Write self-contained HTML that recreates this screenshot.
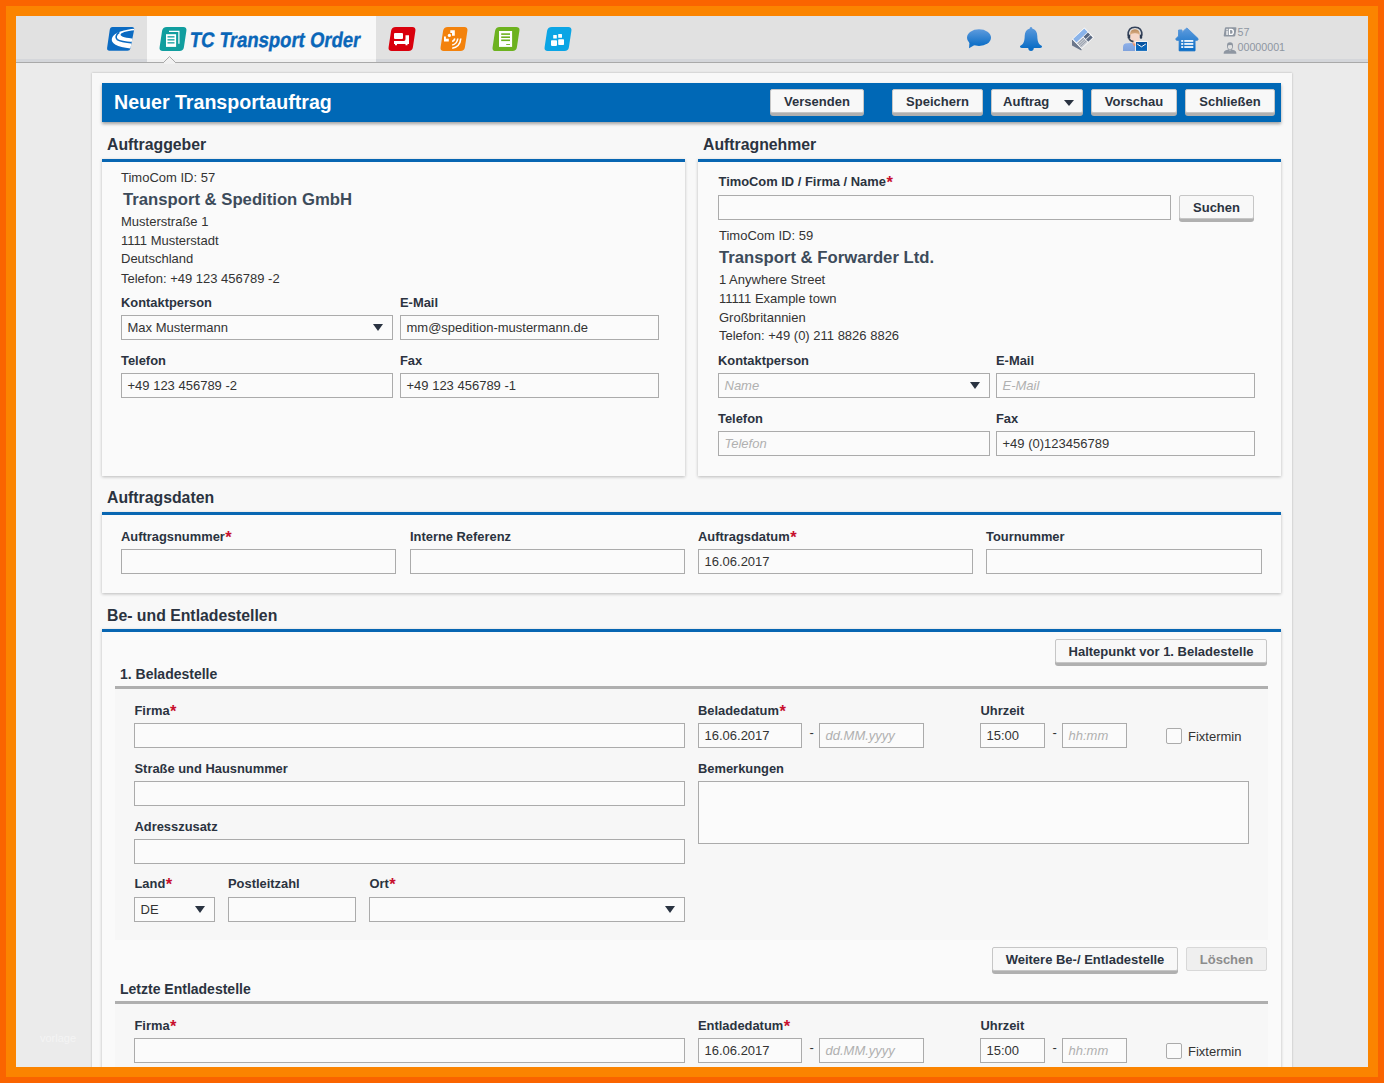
<!DOCTYPE html>
<html><head><meta charset="utf-8"><title>TC Transport Order</title>
<style>
html,body{margin:0;padding:0;}
body{width:1384px;height:1083px;position:relative;overflow:hidden;background:#FA6400;font-family:"Liberation Sans", sans-serif;}
.a{position:absolute;}
.t{position:absolute;white-space:nowrap;font-family:"Liberation Sans", sans-serif;}
</style></head><body>
<div class="a" style="left:0;top:0;width:1384px;height:1083px;overflow:hidden;">
<div class="a" style="left:6px;top:6px;width:1372px;height:1071px;background:#FB8400;"></div>
<div class="a" style="left:16px;top:16px;width:1352px;height:1051px;overflow:hidden;background:#EBEBEB;"><div class="a" style="left:-16px;top:-16px;width:1384px;height:1083px;">
<div class="a" style="left:16px;top:16px;width:1352px;height:46px;background:#E1E1E1;"></div>
<div class="a" style="left:16px;top:59px;width:1352px;height:3px;background:#D4D6DA;"></div>
<div class="a" style="left:16px;top:62px;width:1352px;height:1px;background:#A9A9A9;"></div>
<div class="a" style="left:147px;top:16px;width:229px;height:46px;background:#F8F8F8;"></div>
<div class="a" style="left:147px;top:59px;width:229px;height:3px;background:#F1F1F1;"></div>
<svg class="a" style="left:105px;top:27px;" width="30" height="24" viewBox="0 0 30 24">
<defs><clipPath id="lc"><path d="M7.5,0 H27 Q29.5,0 29.2,2.5 L25.4,21.5 Q25,23.8 22.5,23.8 H4.5 Q1.8,23.8 2.1,21 L4.7,3 Q5.1,0 7.5,0 Z"/></clipPath></defs>
<path d="M7.5,0 H27 Q29.5,0 29.2,2.5 L25.4,21.5 Q25,23.8 22.5,23.8 H4.5 Q1.8,23.8 2.1,21 L4.7,3 Q5.1,0 7.5,0 Z" fill="#0B6BC2"/>
<g clip-path="url(#lc)">
<path d="M30,1.8 C20,2.3 9,5.5 7,11 C5.3,16.5 12,19.8 25.5,21.6 L30,21.6 L30,11.9 C21,11 15.6,9.8 15.6,7.8 C15.6,5.9 21,4 30,3.3 Z" fill="#fff"/>
<path d="M14.3,5.2 C10.8,7.3 10.2,11 12.3,12.6 C14.8,14.4 20,15.2 28,15.9" fill="none" stroke="#0B6BC2" stroke-width="1.6"/>
</g></svg>
<svg class="a" style="left:159px;top:27px;" width="28" height="24" viewBox="0 0 28 24"><path d="M7.8,0 H24.2 Q28,0 27.4,3.8 L24.9,20.2 Q24.3,24 20.5,24 H3.8 Q0,24 0.6,20.2 L3.1,3.8 Q3.7,0 7.8,0 Z" fill="#119E9F"/>
<path d="M10,4.3 H19.9 V16.7" fill="none" stroke="#fff" stroke-width="1.2"/>
<rect x="7" y="7.2" width="10.1" height="12.7" fill="#fff"/>
<rect x="8.5" y="9.2" width="7" height="1.3" fill="#119E9F"/>
<rect x="8.5" y="12.2" width="7" height="1.3" fill="#119E9F"/>
<rect x="8.5" y="15.2" width="7" height="1.3" fill="#119E9F"/></svg>
<svg class="a" style="left:388px;top:27px;" width="28" height="24" viewBox="0 0 28 24"><path d="M7.8,0 H24.2 Q28,0 27.4,3.8 L24.9,20.2 Q24.3,24 20.5,24 H3.8 Q0,24 0.6,20.2 L3.1,3.8 Q3.7,0 7.8,0 Z" fill="#D9000D"/>
<rect x="6" y="6" width="9" height="6" rx="1" fill="#fff"/>
<path d="M6,14 H16 Q17.5,14 17.5,12 V8.2 H21 V17 H19.5 V18.3 H17.5 V17 H9 V18.3 H7 V17 H6 Z" fill="#fff"/></svg>
<svg class="a" style="left:440px;top:27px;" width="28" height="24" viewBox="0 0 28 24"><path d="M7.8,0 H24.2 Q28,0 27.4,3.8 L24.9,20.2 Q24.3,24 20.5,24 H3.8 Q0,24 0.6,20.2 L3.1,3.8 Q3.7,0 7.8,0 Z" fill="#F3820C"/>
<path d="M10.3,3.3 H14.8 V8.7 H12 V6 H10.3 Z" fill="#fff"/>
<circle cx="9.4" cy="8.4" r="1.6" fill="#fff"/>
<path d="M4,9.5 H5.9 V11.8 H8.8 V14.5 H4 Z" fill="#fff"/>
<g fill="none" stroke="#fff" stroke-width="1.6" stroke-linecap="butt">
<path d="M12.2,14.6 Q14.3,13.7 14.8,11.5"/>
<path d="M12.2,18 Q17,17 17.8,11.5"/>
<path d="M12.2,21.3 Q20,20 20.8,11.5"/>
</g></svg>
<svg class="a" style="left:492px;top:27px;" width="28" height="24" viewBox="0 0 28 24"><path d="M7.8,0 H24.2 Q28,0 27.4,3.8 L24.9,20.2 Q24.3,24 20.5,24 H3.8 Q0,24 0.6,20.2 L3.1,3.8 Q3.7,0 7.8,0 Z" fill="#6DB21F"/>
<rect x="7" y="4" width="13.1" height="15.9" fill="#fff"/>
<rect x="9.2" y="6.3" width="8.8" height="1.6" fill="#6DB21F"/>
<rect x="9.2" y="9.4" width="8.8" height="1.6" fill="#6DB21F"/>
<rect x="9.2" y="12.5" width="8.8" height="1.6" fill="#6DB21F"/>
<rect x="14.2" y="17" width="3.8" height="0.9" fill="#6DB21F"/></svg>
<svg class="a" style="left:544px;top:27px;" width="28" height="24" viewBox="0 0 28 24"><path d="M7.8,0 H24.2 Q28,0 27.4,3.8 L24.9,20.2 Q24.3,24 20.5,24 H3.8 Q0,24 0.6,20.2 L3.1,3.8 Q3.7,0 7.8,0 Z" fill="#0BA5E5"/>
<rect x="9.2" y="8" width="3.6" height="3.6" rx="0.5" fill="#fff"/>
<rect x="14.2" y="6.9" width="3.8" height="3.8" rx="0.5" fill="#fff"/>
<rect x="7" y="13.2" width="6" height="5.7" rx="0.8" fill="#fff"/>
<rect x="14.2" y="12.3" width="5.8" height="5.7" rx="0.8" fill="#fff"/></svg>
<svg class="a" style="left:966px;top:28px;" width="26" height="22" viewBox="0 0 26 22"><defs><linearGradient id="gb" x1="0" y1="0" x2="0" y2="1"><stop offset="0" stop-color="#5E9BDD"/><stop offset="1" stop-color="#0A6DC6"/></linearGradient></defs>
<ellipse cx="13" cy="9.6" rx="12" ry="8.4" fill="url(#gb)"/>
<path d="M3.5,14 L3,20.3 L9.5,16.5 Z" fill="#1573C9"/></svg>
<svg class="a" style="left:1019px;top:26px;" width="24" height="26" viewBox="0 0 24 26"><defs><linearGradient id="gl" x1="0" y1="0" x2="0" y2="1"><stop offset="0" stop-color="#5E9BDD"/><stop offset="1" stop-color="#0A6DC6"/></linearGradient></defs>
<path d="M12,1 C13,1 13.3,1.8 13.2,2.6 C16.5,3.4 18.2,6.2 18.3,10 C18.4,15 19.2,17.8 22.6,19.8 Q23.4,20.4 22.8,21.3 Q22.3,22 21,22 H3 Q1.7,22 1.2,21.3 Q0.6,20.4 1.4,19.8 C4.8,17.8 5.6,15 5.7,10 C5.8,6.2 7.5,3.4 10.8,2.6 C10.7,1.8 11,1 12,1 Z" fill="url(#gl)"/>
<path d="M9.2,22 Q9.4,25 12,25 Q14.6,25 14.8,22 Z" fill="#0A6DC6"/></svg>
<svg class="a" style="left:1071px;top:26px;" width="25" height="26" viewBox="0 0 25 26">
<path d="M1,13.2 L10.6,23.1 L10.3,24.6 L1,19.6 Z" fill="#6B778B"/>
<g transform="matrix(9.6,9.9,-12.4,11.8,13.4,1.4)">
<path d="M0,0 H1 V1 H0 Z" fill="#FFFFFF"/>
<rect x="0.05" y="0.05" width="0.35" height="0.9" fill="#8AB3E9"/>
<rect x="0.45" y="0.06" width="0.23" height="0.36" fill="#5A6982"/>
<rect x="0.72" y="0.06" width="0.23" height="0.36" fill="#5A6982"/>
<rect x="0.45" y="0.47" width="0.5" height="0.48" fill="#C8CCD3"/>
<rect x="0.50" y="0.46" width="0.05" height="0.49" fill="#8A93A2"/>
<rect x="0.64" y="0.46" width="0.05" height="0.49" fill="#8A93A2"/>
<rect x="0.78" y="0.46" width="0.05" height="0.49" fill="#8A93A2"/>
</g></svg>
<svg class="a" style="left:1122px;top:26px;" width="26" height="26" viewBox="0 0 26 26">
<defs><linearGradient id="gs" x1="0" y1="0" x2="0" y2="1"><stop offset="0" stop-color="#B98A5C"/><stop offset="1" stop-color="#E2B890"/></linearGradient>
<linearGradient id="gbody" x1="0" y1="0" x2="0" y2="1"><stop offset="0" stop-color="#8DB0EA"/><stop offset="1" stop-color="#7FA2DC"/></linearGradient></defs>
<path d="M1,25 V21 Q1,17.3 5,17.2 L10,17 L13.3,19.5 V25 Z" fill="url(#gbody)"/>
<path d="M9.8,16 H13.8 V20 L11.8,20 Z" fill="#E99572"/>
<path d="M8.2,8 Q8.2,3.5 12.9,3.5 Q17.6,3.5 17.6,8 L17.5,13 Q17,17.3 13,17.5 Q9,17.3 8.4,13 Z" fill="#F6D8CA"/>
<path d="M8,9.5 Q7.8,3.3 12.9,3.3 Q18,3.3 17.8,9.5 Q16.5,7 12.9,7.2 Q9.3,7 8,9.5 Z" fill="url(#gs)"/>
<path d="M6.1,9.5 Q5.8,1.2 13,1.2 Q20.2,1.2 19.9,9.5" fill="none" stroke="#34425A" stroke-width="1.6"/>
<rect x="5.6" y="8.4" width="2.6" height="4.4" rx="1" fill="#2C3A50"/>
<rect x="17.8" y="8.4" width="2.4" height="4.4" rx="1" fill="#2C3A50"/>
<path d="M7,12.5 Q8,15 11.5,15.6" fill="none" stroke="#3A4656" stroke-width="1.7"/>
<rect x="13.4" y="15.3" width="12.2" height="10" fill="#fff" opacity="0.9"/>
<rect x="14" y="16" width="11" height="8.9" fill="#0A66BA"/>
<path d="M14,16 H25 V18 L19.5,21 L14,18 Z" fill="#0552A0"/>
<path d="M15.2,18 L19.5,20.8 L23.8,18" fill="none" stroke="#fff" stroke-width="1"/></svg>
<svg class="a" style="left:1174px;top:26px;" width="26" height="26" viewBox="0 0 26 26"><defs><linearGradient id="gh" x1="0" y1="0" x2="0" y2="1"><stop offset="0" stop-color="#5E9BDD"/><stop offset="1" stop-color="#0A6DC6"/></linearGradient></defs>
<path d="M13,2 L24,12.6 Q24.6,13.8 23.3,14.2 L21,14.2 L21,24.8 L5.2,24.8 L5.2,14.2 L2.7,14.2 Q1.4,13.8 2,12.6 L4.6,10 L4.6,4 L8,4 L8,6.5 L12,2.5 Z" fill="url(#gh)" stroke="url(#gh)" stroke-width="1" stroke-linejoin="round"/>
<g fill="#fff"><rect x="7.2" y="14.1" width="2" height="1.7"/><rect x="10.3" y="14.1" width="9" height="1.7"/>
<rect x="7.2" y="17.1" width="2" height="1.7"/><rect x="10.3" y="17.1" width="9" height="1.7"/>
<rect x="7.2" y="20.2" width="2" height="1.7"/><rect x="10.3" y="20.2" width="9" height="1.7"/></g></svg>
<svg class="a" style="left:1223px;top:27px;" width="14" height="10" viewBox="0 0 14 10">
<path d="M3,0.3 H12.5 Q13.6,0.3 13.4,1.5 L12.3,8.5 Q12.1,9.6 11,9.6 H1.6 Q0.5,9.6 0.7,8.5 L1.8,1.5 Q2,0.3 3,0.3 Z" fill="#8E96A1"/>
<rect x="3.4" y="3.6" width="1.3" height="4.4" fill="#fff"/><rect x="3.4" y="1.8" width="1.3" height="1.2" fill="#fff"/>
<path d="M5.8,1.8 H8.2 Q11,1.8 11,4.9 Q11,8 8.2,8 H5.8 Z M7.1,3 V6.8 H8 Q9.6,6.8 9.6,4.9 Q9.6,3 8,3 Z" fill="#fff"/></svg>
<svg class="a" style="left:1223px;top:42px;" width="14" height="12" viewBox="0 0 14 12">
<path d="M4,3.5 Q4,0.3 7,0.3 Q10,0.3 10,3.5 L9.7,6 Q9,8.3 7,8.3 Q5,8.3 4.3,6 Z" fill="#8E96A1"/>
<path d="M0.6,11.7 Q0.6,8.5 3.6,8 L5.2,7.6 Q7,9.6 8.8,7.6 L10.4,8 Q13.4,8.5 13.4,11.7 Z" fill="#8E96A1"/>
<path d="M5,3.5 Q6.5,2.5 9,3.3 L9,5.5 Q8.5,7.5 7,7.5 Q5.5,7.5 5,5.5 Z" fill="#E1E1E1"/></svg>
<div class="t" style="left:188.5px;top:29px;font-size:21px;line-height:21px;font-weight:bold;color:#0A66B8;-webkit-text-stroke:0.4px #0A66B8;transform:matrix(0.88,0,-0.15,1,0,0);transform-origin:0 18px;">TC Transport Order</div>
<div class="t" style="left:1237.5px;top:26.5px;font-size:10.7px;line-height:11px;color:#8E96A1;">57</div>
<div class="t" style="left:1237.5px;top:42px;font-size:10.7px;line-height:11px;color:#8E96A1;">00000001</div>
<svg class="a" style="left:162px;top:55px;" width="15" height="9" viewBox="0 0 15 9"><path d="M0,7.5 L1.5,7.5 L7.5,1.5 L13.5,7.5 L15,7.5" fill="#F1F1F1" stroke="#A9A9A9" stroke-width="1"/><rect x="2" y="7" width="11" height="2" fill="#F1F1F1"/></svg>
<div class="a" style="left:92px;top:73px;width:1200px;height:1007px;background:#F8F8F8;box-shadow:0 0 2px rgba(0,0,0,0.25);"></div>
<div class="t" style="left:40px;top:1033px;font-size:11px;line-height:11px;color:#F4F4F4;">vorlage</div>
<div class="a" style="left:102px;top:83px;width:1179px;height:39px;background:#0068B6;box-shadow:0 2px 3px rgba(0,0,0,0.35);"></div>
<div class="t" style="left:114px;top:93.20px;font-size:19.6px;line-height:19.6px;color:#FFFFFF;font-weight:bold;">Neuer Transportauftrag</div>
<div class="a" style="left:770px;top:92px;width:94px;height:24px;background:#B0B0B0;border-radius:0 0 3px 3px;"></div>
<div class="a" style="left:770px;top:89px;width:94px;height:24px;border:1px solid #C6C6C6;background:#F8F8F8;box-sizing:border-box;border-radius:2px;"></div>
<div class="t" style="left:770px;width:94px;text-align:center;top:95px;font-size:13px;line-height:13px;font-weight:bold;color:#2B3340;">Versenden</div>
<div class="a" style="left:892px;top:92px;width:91px;height:24px;background:#B0B0B0;border-radius:0 0 3px 3px;"></div>
<div class="a" style="left:892px;top:89px;width:91px;height:24px;border:1px solid #C6C6C6;background:#F8F8F8;box-sizing:border-box;border-radius:2px;"></div>
<div class="t" style="left:892px;width:91px;text-align:center;top:95px;font-size:13px;line-height:13px;font-weight:bold;color:#2B3340;">Speichern</div>
<div class="a" style="left:991px;top:92px;width:92px;height:24px;background:#B0B0B0;border-radius:0 0 3px 3px;"></div>
<div class="a" style="left:991px;top:89px;width:92px;height:24px;border:1px solid #C6C6C6;background:#F8F8F8;box-sizing:border-box;border-radius:2px;"></div>
<div class="t" style="left:991px;width:92px;text-align:center;top:95px;font-size:13px;line-height:13px;font-weight:bold;color:#2B3340;">Auftrag&nbsp;&nbsp;&nbsp;&nbsp;&nbsp;&nbsp;</div>
<div class="a" style="left:1064px;top:99.5px;width:0;height:0;border-left:5.5px solid transparent;border-right:5.5px solid transparent;border-top:6px solid #2A3341;"></div>
<div class="a" style="left:1091px;top:92px;width:86px;height:24px;background:#B0B0B0;border-radius:0 0 3px 3px;"></div>
<div class="a" style="left:1091px;top:89px;width:86px;height:24px;border:1px solid #C6C6C6;background:#F8F8F8;box-sizing:border-box;border-radius:2px;"></div>
<div class="t" style="left:1091px;width:86px;text-align:center;top:95px;font-size:13px;line-height:13px;font-weight:bold;color:#2B3340;">Vorschau</div>
<div class="a" style="left:1185px;top:92px;width:90px;height:24px;background:#B0B0B0;border-radius:0 0 3px 3px;"></div>
<div class="a" style="left:1185px;top:89px;width:90px;height:24px;border:1px solid #C6C6C6;background:#F8F8F8;box-sizing:border-box;border-radius:2px;"></div>
<div class="t" style="left:1185px;width:90px;text-align:center;top:95px;font-size:13px;line-height:13px;font-weight:bold;color:#2B3340;">Schließen</div>
<div class="t" style="left:107px;top:136.90px;font-size:15.8px;line-height:15.8px;color:#2B3340;font-weight:bold;">Auftraggeber</div>
<div class="a" style="left:102px;top:159px;width:583px;height:317px;background:#FAFAFA;box-shadow:0 1px 3px rgba(0,0,0,0.25);"></div>
<div class="a" style="left:102px;top:159px;width:583px;height:3px;background:#0866B2;"></div>
<div class="t" style="left:121px;top:170.80px;font-size:13px;line-height:13px;color:#333;">TimoCom ID: 57</div>
<div class="t" style="left:123px;top:192.45px;font-size:16.7px;line-height:16.7px;color:#3D4B5A;font-weight:bold;">Transport &amp; Spedition GmbH</div>
<div class="t" style="left:121px;top:215.00px;font-size:13px;line-height:13px;color:#333;">Musterstraße 1</div>
<div class="t" style="left:121px;top:233.60px;font-size:13px;line-height:13px;color:#333;">1111 Musterstadt</div>
<div class="t" style="left:121px;top:252.30px;font-size:13px;line-height:13px;color:#333;">Deutschland</div>
<div class="t" style="left:121px;top:271.50px;font-size:13px;line-height:13px;color:#333;">Telefon: +49 123 456789 -2</div>
<div class="t" style="left:121px;top:296.55px;font-size:12.9px;line-height:12.9px;color:#2B3340;font-weight:bold;">Kontaktperson</div>
<div class="t" style="left:400px;top:296.55px;font-size:12.9px;line-height:12.9px;color:#2B3340;font-weight:bold;">E-Mail</div>
<div class="a" style="left:121px;top:315px;width:272px;height:25px;border:1px solid #ABABAB;background:#FBFBFB;box-sizing:border-box;"></div>
<div class="t" style="left:127.5px;top:320.60px;font-size:13px;line-height:13px;color:#333;">Max Mustermann</div>
<div class="a" style="left:372.5px;top:324px;width:0;height:0;border-left:5.5px solid transparent;border-right:5.5px solid transparent;border-top:7px solid #2A3341;"></div>
<div class="a" style="left:400px;top:315px;width:259px;height:25px;border:1px solid #ABABAB;background:#FBFBFB;box-sizing:border-box;"></div>
<div class="t" style="left:406.5px;top:320.60px;font-size:13px;line-height:13px;color:#333;">mm@spedition-mustermann.de</div>
<div class="t" style="left:121px;top:354.75px;font-size:12.9px;line-height:12.9px;color:#2B3340;font-weight:bold;">Telefon</div>
<div class="t" style="left:400px;top:354.75px;font-size:12.9px;line-height:12.9px;color:#2B3340;font-weight:bold;">Fax</div>
<div class="a" style="left:121px;top:373px;width:272px;height:25px;border:1px solid #ABABAB;background:#FBFBFB;box-sizing:border-box;"></div>
<div class="t" style="left:127.5px;top:378.60px;font-size:13px;line-height:13px;color:#333;">+49 123 456789 -2</div>
<div class="a" style="left:400px;top:373px;width:259px;height:25px;border:1px solid #ABABAB;background:#FBFBFB;box-sizing:border-box;"></div>
<div class="t" style="left:406.5px;top:378.60px;font-size:13px;line-height:13px;color:#333;">+49 123 456789 -1</div>
<div class="t" style="left:703px;top:136.60px;font-size:15.8px;line-height:15.8px;color:#2B3340;font-weight:bold;">Auftragnehmer</div>
<div class="a" style="left:698px;top:159px;width:583px;height:317px;background:#FAFAFA;box-shadow:0 1px 3px rgba(0,0,0,0.25);"></div>
<div class="a" style="left:698px;top:159px;width:583px;height:3px;background:#0866B2;"></div>
<div class="t" style="left:718.5px;top:176.25px;font-size:12.9px;line-height:12.9px;color:#2B3340;font-weight:bold;">TimoCom ID / Firma / Name<span style="color:#C8102E;font-size:16.5px;line-height:0;position:relative;top:1.5px;margin-left:0.5px">*</span></div>
<div class="a" style="left:718px;top:195px;width:453px;height:25px;border:1px solid #ABABAB;background:#FBFBFB;box-sizing:border-box;"></div>
<div class="a" style="left:1179px;top:198px;width:75px;height:24px;background:#B0B0B0;border-radius:0 0 3px 3px;"></div>
<div class="a" style="left:1179px;top:195px;width:75px;height:24px;border:1px solid #C6C6C6;background:#F8F8F8;box-sizing:border-box;border-radius:2px;"></div>
<div class="t" style="left:1179px;width:75px;text-align:center;top:201px;font-size:13px;line-height:13px;font-weight:bold;color:#2B3340;">Suchen</div>
<div class="t" style="left:719px;top:228.80px;font-size:13px;line-height:13px;color:#333;">TimoCom ID: 59</div>
<div class="t" style="left:719px;top:250.35px;font-size:16.7px;line-height:16.7px;color:#3D4B5A;font-weight:bold;">Transport &amp; Forwarder Ltd.</div>
<div class="t" style="left:719px;top:272.80px;font-size:13px;line-height:13px;color:#333;">1 Anywhere Street</div>
<div class="t" style="left:719px;top:291.70px;font-size:13px;line-height:13px;color:#333;">11111 Example town</div>
<div class="t" style="left:719px;top:310.50px;font-size:13px;line-height:13px;color:#333;">Großbritannien</div>
<div class="t" style="left:719px;top:329.20px;font-size:13px;line-height:13px;color:#333;">Telefon: +49 (0) 211 8826 8826</div>
<div class="t" style="left:718px;top:355.15px;font-size:12.9px;line-height:12.9px;color:#2B3340;font-weight:bold;">Kontaktperson</div>
<div class="t" style="left:996px;top:355.15px;font-size:12.9px;line-height:12.9px;color:#2B3340;font-weight:bold;">E-Mail</div>
<div class="a" style="left:718px;top:373px;width:272px;height:25px;border:1px solid #ABABAB;background:#FBFBFB;box-sizing:border-box;"></div>
<div class="t" style="left:724.5px;top:378.60px;font-size:13px;line-height:13px;color:#B0B0B0;font-style:italic;">Name</div>
<div class="a" style="left:969.5px;top:382px;width:0;height:0;border-left:5.5px solid transparent;border-right:5.5px solid transparent;border-top:7px solid #2A3341;"></div>
<div class="a" style="left:996px;top:373px;width:259px;height:25px;border:1px solid #ABABAB;background:#FBFBFB;box-sizing:border-box;"></div>
<div class="t" style="left:1002.5px;top:378.60px;font-size:13px;line-height:13px;color:#B0B0B0;font-style:italic;">E-Mail</div>
<div class="t" style="left:718px;top:412.55px;font-size:12.9px;line-height:12.9px;color:#2B3340;font-weight:bold;">Telefon</div>
<div class="t" style="left:996px;top:412.55px;font-size:12.9px;line-height:12.9px;color:#2B3340;font-weight:bold;">Fax</div>
<div class="a" style="left:718px;top:431px;width:272px;height:25px;border:1px solid #ABABAB;background:#FBFBFB;box-sizing:border-box;"></div>
<div class="t" style="left:724.5px;top:436.60px;font-size:13px;line-height:13px;color:#B0B0B0;font-style:italic;">Telefon</div>
<div class="a" style="left:996px;top:431px;width:259px;height:25px;border:1px solid #ABABAB;background:#FBFBFB;box-sizing:border-box;"></div>
<div class="t" style="left:1002.5px;top:436.60px;font-size:13px;line-height:13px;color:#333;">+49 (0)123456789</div>
<div class="t" style="left:107px;top:489.60px;font-size:15.8px;line-height:15.8px;color:#2B3340;font-weight:bold;">Auftragsdaten</div>
<div class="a" style="left:102px;top:512px;width:1179px;height:81px;background:#FAFAFA;box-shadow:0 1px 3px rgba(0,0,0,0.25);"></div>
<div class="a" style="left:102px;top:512px;width:1179px;height:3px;background:#0866B2;"></div>
<div class="t" style="left:121px;top:531.25px;font-size:12.9px;line-height:12.9px;color:#2B3340;font-weight:bold;">Auftragsnummer<span style="color:#C8102E;font-size:16.5px;line-height:0;position:relative;top:1.5px;margin-left:0.5px">*</span></div>
<div class="t" style="left:410px;top:531.25px;font-size:12.9px;line-height:12.9px;color:#2B3340;font-weight:bold;">Interne Referenz</div>
<div class="t" style="left:698px;top:531.25px;font-size:12.9px;line-height:12.9px;color:#2B3340;font-weight:bold;">Auftragsdatum<span style="color:#C8102E;font-size:16.5px;line-height:0;position:relative;top:1.5px;margin-left:0.5px">*</span></div>
<div class="t" style="left:986px;top:531.25px;font-size:12.9px;line-height:12.9px;color:#2B3340;font-weight:bold;">Tournummer</div>
<div class="a" style="left:121px;top:549px;width:275px;height:25px;border:1px solid #ABABAB;background:#FBFBFB;box-sizing:border-box;"></div>
<div class="a" style="left:410px;top:549px;width:275px;height:25px;border:1px solid #ABABAB;background:#FBFBFB;box-sizing:border-box;"></div>
<div class="a" style="left:698px;top:549px;width:275px;height:25px;border:1px solid #ABABAB;background:#FBFBFB;box-sizing:border-box;"></div>
<div class="t" style="left:704.5px;top:554.60px;font-size:13px;line-height:13px;color:#333;">16.06.2017</div>
<div class="a" style="left:986px;top:549px;width:276px;height:25px;border:1px solid #ABABAB;background:#FBFBFB;box-sizing:border-box;"></div>
<div class="t" style="left:107px;top:607.60px;font-size:15.8px;line-height:15.8px;color:#2B3340;font-weight:bold;">Be- und Entladestellen</div>
<div class="a" style="left:102px;top:629px;width:1179px;height:451px;background:#FAFAFA;box-shadow:0 1px 3px rgba(0,0,0,0.25);"></div>
<div class="a" style="left:102px;top:629px;width:1179px;height:3px;background:#0866B2;"></div>
<div class="a" style="left:1055px;top:642px;width:212px;height:24px;background:#B0B0B0;border-radius:0 0 3px 3px;"></div>
<div class="a" style="left:1055px;top:639px;width:212px;height:24px;border:1px solid #C6C6C6;background:#F8F8F8;box-sizing:border-box;border-radius:2px;"></div>
<div class="t" style="left:1055px;width:212px;text-align:center;top:645px;font-size:13px;line-height:13px;font-weight:bold;color:#2B3340;">Haltepunkt vor 1. Beladestelle</div>
<div class="t" style="left:120px;top:667.00px;font-size:14px;line-height:14px;color:#2B3340;font-weight:bold;">1. Beladestelle</div>
<div class="a" style="left:115px;top:686px;width:1153px;height:3px;background:#AFAFAF;"></div>
<div class="a" style="left:115px;top:689px;width:1153px;height:251px;background:#F7F7F7;"></div>
<div class="t" style="left:134.5px;top:705.15px;font-size:12.9px;line-height:12.9px;color:#2B3340;font-weight:bold;">Firma<span style="color:#C8102E;font-size:16.5px;line-height:0;position:relative;top:1.5px;margin-left:0.5px">*</span></div>
<div class="a" style="left:134px;top:723px;width:551px;height:25px;border:1px solid #ABABAB;background:#FBFBFB;box-sizing:border-box;"></div>
<div class="t" style="left:698px;top:705.15px;font-size:12.9px;line-height:12.9px;color:#2B3340;font-weight:bold;">Beladedatum<span style="color:#C8102E;font-size:16.5px;line-height:0;position:relative;top:1.5px;margin-left:0.5px">*</span></div>
<div class="a" style="left:698px;top:723px;width:104px;height:25px;border:1px solid #ABABAB;background:#FBFBFB;box-sizing:border-box;"></div>
<div class="t" style="left:704.5px;top:728.60px;font-size:13px;line-height:13px;color:#333;">16.06.2017</div>
<div class="t" style="left:809.5px;top:726.10px;font-size:13px;line-height:13px;color:#333;">-</div>
<div class="a" style="left:819px;top:723px;width:105px;height:25px;border:1px solid #ABABAB;background:#FBFBFB;box-sizing:border-box;"></div>
<div class="t" style="left:825.5px;top:728.60px;font-size:13px;line-height:13px;color:#B0B0B0;font-style:italic;">dd.MM.yyyy</div>
<div class="t" style="left:980.5px;top:705.15px;font-size:12.9px;line-height:12.9px;color:#2B3340;font-weight:bold;">Uhrzeit</div>
<div class="a" style="left:980px;top:723px;width:65px;height:25px;border:1px solid #ABABAB;background:#FBFBFB;box-sizing:border-box;"></div>
<div class="t" style="left:986.5px;top:728.60px;font-size:13px;line-height:13px;color:#333;">15:00</div>
<div class="t" style="left:1052.5px;top:726.10px;font-size:13px;line-height:13px;color:#333;">-</div>
<div class="a" style="left:1062px;top:723px;width:65px;height:25px;border:1px solid #ABABAB;background:#FBFBFB;box-sizing:border-box;"></div>
<div class="t" style="left:1068.5px;top:728.60px;font-size:13px;line-height:13px;color:#B0B0B0;font-style:italic;">hh:mm</div>
<div class="a" style="left:1166px;top:728px;width:16px;height:16px;border:1px solid #ABABAB;background:#FBFBFB;box-sizing:border-box;border-radius:2px;"></div>
<div class="t" style="left:1188px;top:729.80px;font-size:13px;line-height:13px;color:#333;">Fixtermin</div>
<div class="t" style="left:134.5px;top:763.05px;font-size:12.9px;line-height:12.9px;color:#2B3340;font-weight:bold;">Straße und Hausnummer</div>
<div class="a" style="left:134px;top:781px;width:551px;height:25px;border:1px solid #ABABAB;background:#FBFBFB;box-sizing:border-box;"></div>
<div class="t" style="left:698px;top:763.05px;font-size:12.9px;line-height:12.9px;color:#2B3340;font-weight:bold;">Bemerkungen</div>
<div class="a" style="left:698px;top:781px;width:551px;height:63px;border:1px solid #ABABAB;background:#FBFBFB;box-sizing:border-box;"></div>
<div class="t" style="left:134.5px;top:821.05px;font-size:12.9px;line-height:12.9px;color:#2B3340;font-weight:bold;">Adresszusatz</div>
<div class="a" style="left:134px;top:839px;width:551px;height:24.5px;border:1px solid #ABABAB;background:#FBFBFB;box-sizing:border-box;"></div>
<div class="t" style="left:134.5px;top:878.35px;font-size:12.9px;line-height:12.9px;color:#2B3340;font-weight:bold;">Land<span style="color:#C8102E;font-size:16.5px;line-height:0;position:relative;top:1.5px;margin-left:0.5px">*</span></div>
<div class="t" style="left:228px;top:878.35px;font-size:12.9px;line-height:12.9px;color:#2B3340;font-weight:bold;">Postleitzahl</div>
<div class="t" style="left:369.5px;top:878.35px;font-size:12.9px;line-height:12.9px;color:#2B3340;font-weight:bold;">Ort<span style="color:#C8102E;font-size:16.5px;line-height:0;position:relative;top:1.5px;margin-left:0.5px">*</span></div>
<div class="a" style="left:134px;top:897px;width:81px;height:24.5px;border:1px solid #ABABAB;background:#FBFBFB;box-sizing:border-box;"></div>
<div class="t" style="left:140.5px;top:902.60px;font-size:13px;line-height:13px;color:#333;">DE</div>
<div class="a" style="left:194.5px;top:906px;width:0;height:0;border-left:5.5px solid transparent;border-right:5.5px solid transparent;border-top:7px solid #2A3341;"></div>
<div class="a" style="left:228px;top:897px;width:128px;height:24.5px;border:1px solid #ABABAB;background:#FBFBFB;box-sizing:border-box;"></div>
<div class="a" style="left:369px;top:897px;width:316px;height:24.5px;border:1px solid #ABABAB;background:#FBFBFB;box-sizing:border-box;"></div>
<div class="a" style="left:664.5px;top:906px;width:0;height:0;border-left:5.5px solid transparent;border-right:5.5px solid transparent;border-top:7px solid #2A3341;"></div>
<div class="a" style="left:992px;top:950px;width:186px;height:24px;background:#B0B0B0;border-radius:0 0 3px 3px;"></div>
<div class="a" style="left:992px;top:947px;width:186px;height:24px;border:1px solid #C6C6C6;background:#F8F8F8;box-sizing:border-box;border-radius:2px;"></div>
<div class="t" style="left:992px;width:186px;text-align:center;top:953px;font-size:13px;line-height:13px;font-weight:bold;color:#2B3340;">Weitere Be-/ Entladestelle</div>
<div class="a" style="left:1186px;top:947px;width:81px;height:24px;border:1px solid #D8D8D8;background:#EFEFEF;box-sizing:border-box;border-radius:2px;"></div>
<div class="t" style="left:1186px;width:81px;text-align:center;top:953px;font-size:13px;line-height:13px;font-weight:bold;color:#8C8C8C;">Löschen</div>
<div class="t" style="left:120px;top:982.00px;font-size:14px;line-height:14px;color:#2B3340;font-weight:bold;">Letzte Entladestelle</div>
<div class="a" style="left:115px;top:1001px;width:1153px;height:3px;background:#AFAFAF;"></div>
<div class="a" style="left:115px;top:1004px;width:1153px;height:251px;background:#F7F7F7;"></div>
<div class="t" style="left:134.5px;top:1020.15px;font-size:12.9px;line-height:12.9px;color:#2B3340;font-weight:bold;">Firma<span style="color:#C8102E;font-size:16.5px;line-height:0;position:relative;top:1.5px;margin-left:0.5px">*</span></div>
<div class="a" style="left:134px;top:1038px;width:551px;height:25px;border:1px solid #ABABAB;background:#FBFBFB;box-sizing:border-box;"></div>
<div class="t" style="left:698px;top:1020.15px;font-size:12.9px;line-height:12.9px;color:#2B3340;font-weight:bold;">Entladedatum<span style="color:#C8102E;font-size:16.5px;line-height:0;position:relative;top:1.5px;margin-left:0.5px">*</span></div>
<div class="a" style="left:698px;top:1038px;width:104px;height:25px;border:1px solid #ABABAB;background:#FBFBFB;box-sizing:border-box;"></div>
<div class="t" style="left:704.5px;top:1043.60px;font-size:13px;line-height:13px;color:#333;">16.06.2017</div>
<div class="t" style="left:809.5px;top:1041.10px;font-size:13px;line-height:13px;color:#333;">-</div>
<div class="a" style="left:819px;top:1038px;width:105px;height:25px;border:1px solid #ABABAB;background:#FBFBFB;box-sizing:border-box;"></div>
<div class="t" style="left:825.5px;top:1043.60px;font-size:13px;line-height:13px;color:#B0B0B0;font-style:italic;">dd.MM.yyyy</div>
<div class="t" style="left:980.5px;top:1020.15px;font-size:12.9px;line-height:12.9px;color:#2B3340;font-weight:bold;">Uhrzeit</div>
<div class="a" style="left:980px;top:1038px;width:65px;height:25px;border:1px solid #ABABAB;background:#FBFBFB;box-sizing:border-box;"></div>
<div class="t" style="left:986.5px;top:1043.60px;font-size:13px;line-height:13px;color:#333;">15:00</div>
<div class="t" style="left:1052.5px;top:1041.10px;font-size:13px;line-height:13px;color:#333;">-</div>
<div class="a" style="left:1062px;top:1038px;width:65px;height:25px;border:1px solid #ABABAB;background:#FBFBFB;box-sizing:border-box;"></div>
<div class="t" style="left:1068.5px;top:1043.60px;font-size:13px;line-height:13px;color:#B0B0B0;font-style:italic;">hh:mm</div>
<div class="a" style="left:1166px;top:1043px;width:16px;height:16px;border:1px solid #ABABAB;background:#FBFBFB;box-sizing:border-box;border-radius:2px;"></div>
<div class="t" style="left:1188px;top:1044.80px;font-size:13px;line-height:13px;color:#333;">Fixtermin</div>
</div></div>
</div>
</body></html>
